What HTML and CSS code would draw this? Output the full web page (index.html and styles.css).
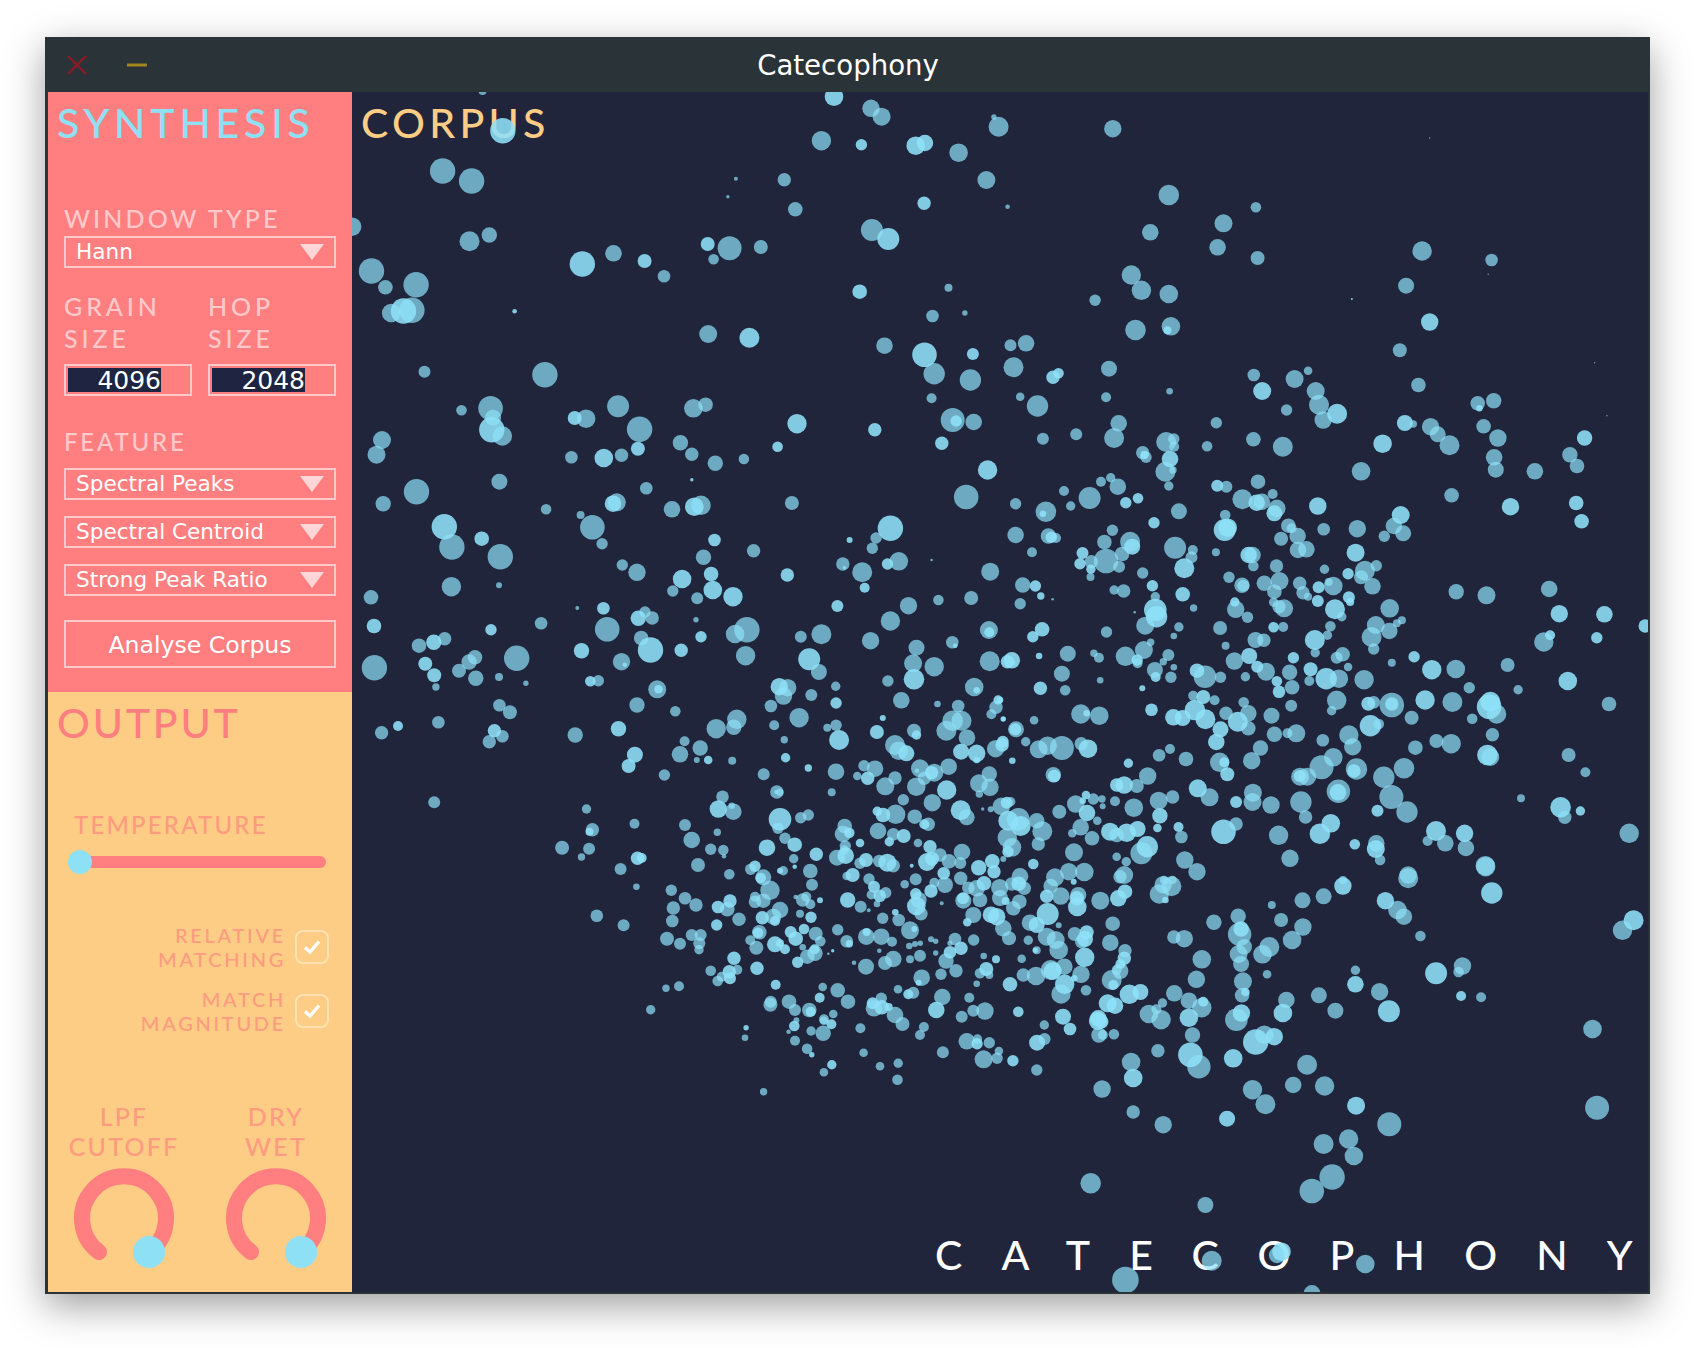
FILE: index.html
```html
<!DOCTYPE html>
<html lang="en">
<head>
    <meta charset="UTF-8">
    <title>Catecophony</title>
    <link rel="stylesheet" href="styles.css">
</head>
<body>
<div class="window">
    <header class="titlebar">
        <div class="controls">
            <svg class="ctl" width="20" height="20" viewBox="0 0 20 20"><path d="M1 1L19 19M19 1L1 19" stroke="#8c1a24" stroke-width="2.4" fill="none"/></svg>
            <svg class="ctl" width="20" height="20" viewBox="0 0 20 20"><path d="M0 10H20" stroke="#a3861f" stroke-width="3" fill="none"/></svg>
        </div>
        <span class="title">Catecophony</span>
    </header>

    <div class="main">
        <aside class="sidebar">
            <section class="panel synthesis">
                <h2 class="panel-title">SYNTHESIS</h2>

                <div class="label window-label">WINDOW TYPE</div>
                <div class="select">Hann</div>

                <div class="size-row">
                    <div class="size">
                        <div class="label">GRAIN<br>SIZE</div>
                        <div class="number"><span class="selected">4096</span></div>
                    </div>
                    <div class="size">
                        <div class="label">HOP<br>SIZE</div>
                        <div class="number"><span class="selected">2048</span></div>
                    </div>
                </div>

                <div class="label feature-label">FEATURE</div>
                <div class="select">Spectral Peaks</div>
                <div class="select">Spectral Centroid</div>
                <div class="select">Strong Peak Ratio</div>

                <button class="analyse" type="button">Analyse Corpus</button>
            </section>

            <section class="panel output">
                <h2 class="panel-title">OUTPUT</h2>

                <div class="label temp-label">TEMPERATURE</div>
                <div class="slider"><span class="thumb"></span></div>

                <div class="check-row first">
                    <div class="check-label">RELATIVE<br>MATCHING</div>
                    <div class="check"><svg width="18" height="16" viewBox="0 0 18 16"><path d="M2 8.5L7 13L16 2.5" stroke="#fff" stroke-width="3.4" fill="none"/></svg></div>
                </div>
                <div class="check-row">
                    <div class="check-label">MATCH<br>MAGNITUDE</div>
                    <div class="check"><svg width="18" height="16" viewBox="0 0 18 16"><path d="M2 8.5L7 13L16 2.5" stroke="#fff" stroke-width="3.4" fill="none"/></svg></div>
                </div>

                <div class="knobs">
                    <div class="knob">
                        <div class="label">LPF<br>CUTOFF</div>
                        <svg width="116" height="116" viewBox="0 0 116 116">
                            <path d="M33 92A42 42 0 1 1 83 92" fill="none" stroke="#ff7f80" stroke-width="16" stroke-linecap="round"/>
                            <circle cx="83" cy="92" r="16" fill="#8ee1f4"/>
                        </svg>
                    </div>
                    <div class="knob">
                        <div class="label">DRY<br>WET</div>
                        <svg width="116" height="116" viewBox="0 0 116 116">
                            <path d="M33 92A42 42 0 1 1 83 92" fill="none" stroke="#ff7f80" stroke-width="16" stroke-linecap="round"/>
                            <circle cx="83" cy="92" r="16" fill="#8ee1f4"/>
                        </svg>
                    </div>
                </div>
            </section>
        </aside>

        <main class="corpus">
            <h2 class="corpus-title">CORPUS</h2>
            <div class="wordmark">CATECOPHON<span class="last">Y</span></div>
            <svg id="grains" class="grains" width="1296" height="1200"></svg>
        </main>
    </div>
</div>
<script src="scatter.js"></script>
</body>
</html>
```

FILE: styles.css
```css
* {
    box-sizing: border-box;
}

html {
    background: #fff;
}

body {
    margin: 0;
    min-height: 1348px;
    padding: 37px 46px 54px 45px;
    background: #fff;
    font-family: 'Lato', 'Liberation Sans', sans-serif;
}

.window {
    width: 1605px;
    border: 2px solid #2a3338;
    border-left-width: 3px;
    background: #2a3338;
    box-shadow: 0 12px 36px rgba(0, 0, 0, 0.38);
}

.titlebar {
    position: relative;
    height: 53px;
    display: flex;
    align-items: center;
    justify-content: center;
    background: #2a3338;
}

.controls {
    position: absolute;
    left: 19px;
    top: 16px;
    display: flex;
    gap: 40px;
}

.ctl {
    display: block;
}

.title {
    font-family: 'DejaVu Sans', sans-serif;
    font-size: 27.6px;
    color: #fff;
}

.main {
    display: flex;
    height: 1200px;
}

.sidebar {
    width: 304px;
    flex: none;
    display: flex;
    flex-direction: column;
}

.panel {
    height: 600px;
    padding: 7px 16px 0;
}

.synthesis {
    background: #ff7f80;
}

.output {
    background: #fdcc85;
}

.panel-title {
    margin: 0 0 0 -7px;
    font-size: 41px;
    line-height: 48px;
    font-weight: 500;
    letter-spacing: 4.8px;
}

.synthesis .panel-title {
    color: #8ee1f4;
}

.output .panel-title {
    color: #ff7f80;
    letter-spacing: 2.8px;
}

.label {
    font-size: 25px;
    font-weight: 500;
    line-height: 32px;
    letter-spacing: 3.1px;
    color: #ffc9cc;
}

.window-label {
    margin-top: 55px;
    margin-bottom: 2px;
}

.select {
    height: 32px;
    border: 2px solid #ffc9cc;
    display: flex;
    align-items: center;
    justify-content: space-between;
    padding: 0 10px 2px 10px;
    font-family: 'DejaVu Sans', sans-serif;
    font-size: 21.6px;
    color: #fff;
    margin-bottom: 16px;
}

.select::after {
    content: "";
    width: 0;
    height: 0;
    margin-top: 2px;
    border-left: 12px solid transparent;
    border-right: 12px solid transparent;
    border-top: 16px solid #ffd6d8;
}

.size-row {
    display: flex;
    gap: 16px;
    margin-top: 22px;
}

.size {
    width: 128px;
}

.size .label {
    letter-spacing: 3.9px;
}

.number {
    margin-top: 10px;
    height: 32px;
    border: 2px solid #ffc9cc;
    padding: 2px 0 2px 2px;
}

.selected {
    display: block;
    width: 93px;
    height: 24px;
    background: #1f2540;
    color: #fff;
    text-align: right;
    font-family: 'DejaVu Sans', sans-serif;
    font-size: 25px;
    line-height: 25px;
}

.feature-label {
    margin-top: 30px;
    margin-bottom: 10px;
    letter-spacing: 2.8px;
    font-size: 24px;
}

.analyse {
    display: block;
    width: 100%;
    height: 48px;
    margin-top: 24px;
    border: 2px solid #ffc9cc;
    background: transparent;
    color: #fff;
    font-family: 'DejaVu Sans', sans-serif;
    font-size: 23.6px;
    padding: 2px 0 0;
}

.output .label {
    color: #fe9b80;
}

.temp-label {
    margin: 62px 0 9px 10px;
    font-size: 24px;
    letter-spacing: 2.2px;
}

.slider {
    position: relative;
    height: 12px;
    margin: 15px 10px 0 16px;
    border-radius: 6px;
    background: #ff7f80;
}

.thumb {
    position: absolute;
    left: -12px;
    top: -6px;
    width: 24px;
    height: 24px;
    border-radius: 50%;
    background: #8ee1f4;
}

.check-row {
    display: flex;
    justify-content: flex-end;
    align-items: center;
    gap: 9px;
    height: 48px;
    margin-top: 16px;
    padding-right: 7px;
}

.check-row.first {
    margin-top: 55px;
}

.check-label {
    font-size: 20px;
    font-weight: 500;
    line-height: 24px;
    letter-spacing: 2.7px;
    color: #fe9b80;
    text-align: right;
}

.check {
    width: 34px;
    height: 34px;
    border: 2px solid #ffe1b3;
    border-radius: 8px;
    display: flex;
    align-items: center;
    justify-content: center;
}

.knobs {
    display: flex;
    gap: 12px;
    margin: 66px -10px 0;
}

.knob {
    width: 140px;
    text-align: center;
}

.knob .label {
    line-height: 30px;
    letter-spacing: 2.2px;
}

.knob svg {
    display: block;
    margin: -1px auto 0;
}

.corpus {
    position: relative;
    flex: 1;
    overflow: hidden;
    background: #20253c;
}

.corpus-title {
    position: absolute;
    left: 9px;
    top: 7px;
    margin: 0;
    font-size: 41px;
    line-height: 48px;
    font-weight: 500;
    letter-spacing: 4.3px;
    color: #fdcc85;
}

.wordmark {
    position: absolute;
    left: 583px;
    top: 1139px;
    font-size: 41px;
    font-weight: 500;
    line-height: 48px;
    letter-spacing: 39.2px;
    color: #fff;
    white-space: nowrap;
}

.wordmark .last {
    letter-spacing: 0;
}

.grains {
    position: absolute;
    left: 0;
    top: 0;
}
```

FILE: scatter.js
```js
// Corpus grains, grouped in patches of the map.
// Patch = [left, top, x scale, points], point = [x, y, r, bright]; y and r are always at scale 3.
const patches = [
[350,85,2.376,[[315,18,12,0],[1150,35,28,1],[1238,70,26,0],[1263,95,27,0],[1530,96,8,0],[1541,125,30,0],[1120,167,29,0],[1215,179,17,1],[1344,182,28,1],[1366,174,25,1],[1446,203,28,0],[1512,285,27,0],[220,258,38,0],[289,288,38,0],[363,137,38,1],[917,281,6,0],[898,335,5,0],[1032,284,20,0],[1058,373,22,0],[1364,355,20,1],[5,425,28,0],[284,469,30,0],[331,450,23,0],[1240,435,33,0],[1279,462,33,1],[552,537,38,1],[626,505,25,0],[700,528,21,1],[746,574,19,0],[850,477,21,1],[902,490,36,0],[864,523,16,0],[976,486,21,0],[51,558,38,0],[84,607,22,0],[157,599,38,0],[98,684,28,0],[147,676,38,0],[127,678,38,1],[391,679,7,1],[1211,620,22,1],[1422,608,12,0],[1384,693,19,0],[1461,684,8,0],[851,747,27,0],[949,758,30,1],[1270,782,25,0],[1365,809,37,1],[1480,807,18,1],[1388,866,32,0],[1474,885,32,0],[177,860,18,0],[463,869,38,0],[1382,940,15,0],[334,970,37,0],[340,998,24,0],[362,1053,29,0],[337,1034,38,1],[265,976,16,0],[637,964,33,0],[561,1001,28,0],[534,999,21,1],[688,1033,38,0],[816,970,28,0],[845,959,22,0],[1062,1016,29,1],[1247,1034,20,1],[1432,1005,36,0],[1440,1008,17,1],[1482,1011,25,0],[76,1065,27,0],[63,1109,27,0],[1406,1075,20,1],[785,1073,23,0],[812,1108,20,0],[684,1091,21,1],[645,1111,20,0],[603,1119,28,1],[526,1117,19,0],[868,1135,23,0],[936,1122,16,0],[1016,1085,16,1],[1515,1155,29,1],[812,1184,5,1]]],
[1000,85,2.376,[[268,131,26,0],[1021,159,2,0],[18,365,7,0],[401,330,31,0],[357,442,25,0],[608,367,16,0],[531,415,27,0],[517,487,25,0],[612,519,21,0],[1003,498,29,0],[1168,525,19,0],[1160,568,2,0],[312,570,29,0],[336,616,29,0],[401,627,28,0],[226,646,17,0],[965,602,24,0],[836,642,3,1],[1021,711,26,1],[322,735,31,0],[406,724,28,0],[398,736,12,1],[950,796,21,0],[25,781,18,0],[62,775,25,0],[32,847,30,0],[126,877,20,1],[139,865,16,1],[259,851,24,0],[1413,833,2,0],[603,870,19,0],[700,882,27,0],[732,857,13,0],[623,918,27,1],[994,900,22,0],[750,918,27,0],[758,959,30,0],[768,1005,26,0],[801,986,30,1],[681,975,17,0],[48,935,13,0],[89,963,32,0],[252,937,15,0],[403,919,10,0],[1135,955,22,0],[1173,947,23,0],[1139,970,10,1],[962,1014,24,1],[982,1017,11,0],[1023,1025,26,0],[1040,1048,24,0],[1068,1081,30,0],[1149,1024,22,0],[1183,1059,26,0],[1442,992,2,0],[282,1015,25,0],[271,1059,30,0],[514,1013,17,0],[181,1048,18,0],[102,1061,18,0],[602,1063,22,0],[492,1084,16,0],[672,1085,30,0],[909,1076,28,1],[1389,1059,23,1],[395,1071,30,0],[413,1062,17,0],[414,1085,15,0],[339,1103,20,0],[347,1117,17,0],[343,1109,12,1],[393,1160,30,0],[404,1122,25,1],[411,1155,11,0],[1174,1117,25,0],[1178,1154,24,0],[1354,1109,23,0],[1371,1143,22,0],[858,1159,28,0],[1271,1159,25,0],[263,1178,14,0]]],
[350,480,2.376,[[158,35,38,0],[355,5,24,0],[79,71,23,0],[466,88,16,0],[704,25,19,0],[634,67,27,0],[625,71,25,1],[548,105,12,0],[576,142,37,0],[599,191,17,0],[765,88,25,0],[834,76,29,0],[818,80,28,1],[1050,69,21,0],[1464,51,37,0],[242,201,38,0],[224,140,38,1],[313,176,22,1],[357,230,38,0],[241,320,29,0],[354,316,9,0],[50,352,22,0],[57,438,22,1],[647,255,17,0],[682,277,26,0],[866,180,19,1],[840,232,23,0],[959,212,20,0],[789,297,28,1],[858,282,22,1],[862,330,28,1],[910,350,29,1],[767,333,17,0],[825,355,18,0],[1039,285,20,1],[1284,145,38,1],[1187,180,9,1],[1250,174,17,0],[1241,205,17,0],[1171,252,20,0],[1175,263,5,1],[1217,277,30,0],[1304,244,28,0],[1277,252,17,1],[1223,323,15,1],[1382,240,4,0],[1521,275,27,0],[1158,378,18,1],[1327,377,26,0],[1398,360,16,0],[1476,354,21,0],[1284,423,29,0],[540,384,6,0],[602,385,19,1],[701,396,17,0],[718,414,20,0],[685,415,23,1],[611,448,37,0],[822,419,8,0],[943,449,38,0],[915,462,28,0],[834,470,17,1],[692,474,22,0],[714,510,38,1],[787,511,20,1],[550,512,23,1],[645,545,26,0],[653,554,7,1],[940,527,29,0],[1071,470,18,0],[1120,463,30,0],[1237,482,26,0],[1346,503,24,0],[1431,487,19,0],[1438,497,7,1],[1518,450,27,0],[1519,457,15,1],[1114,576,24,0],[1091,538,33,1],[1338,550,27,0],[1388,560,29,0],[1520,544,30,0],[1562,545,20,1],[1340,598,31,1],[454,430,19,0],[335,449,17,1],[225,476,20,0],[164,497,22,0],[199,487,23,1],[179,551,21,1],[200,586,21,1],[204,621,11,0],[58,563,38,0],[259,572,21,0],[283,546,23,0],[297,532,22,0],[396,535,38,0],[299,595,23,0],[354,591,12,0],[418,610,8,0],[355,676,19,0],[380,697,21,0],[210,727,19,0],[114,738,15,1],[75,758,20,0],[362,769,19,0],[331,785,20,0],[343,752,20,1],[200,967,18,0],[590,602,17,0],[571,604,16,1],[730,628,27,0],[733,628,13,1],[682,675,23,0],[773,694,16,0],[638,746,23,1],[535,765,23,0],[677,824,24,1],[662,858,21,1],[795,784,15,0],[832,804,23,0],[784,823,25,0],[824,840,9,0],[851,840,13,1],[908,842,12,0],[747,885,17,0],[870,746,29,0],[919,718,29,0],[912,742,23,0],[1040,623,26,0],[1030,648,26,0],[1020,620,26,1],[1000,678,19,0],[1096,645,18,0],[1154,619,14,0],[1155,669,17,1],[1067,713,29,0],[1008,736,15,0],[1032,779,11,0],[1035,833,14,1],[1089,863,10,1],[1155,736,17,0],[1134,743,12,0],[1162,780,30,1],[983,883,18,0],[1014,936,20,0],[1013,936,6,1],[1155,873,25,0],[1145,937,10,0],[1278,603,17,0],[1310,661,25,0],[1396,672,10,0],[1266,714,9,1],[1252,756,21,1],[1483,621,28,0],[1489,631,10,1],[1445,678,19,0],[1535,682,20,0],[1540,660,14,1],[1524,703,15,0],[1552,717,8,1],[1432,722,31,0],[1453,722,30,0],[1417,752,30,0],[1466,773,25,0],[1340,752,21,0],[1346,765,14,1],[1295,795,30,0],[1304,812,28,0],[1322,820,24,1],[1534,806,26,0],[1551,785,18,1],[1452,815,24,1],[1489,820,26,1],[1222,857,17,0],[1246,866,24,0],[1204,889,13,0],[1230,895,19,1],[1294,893,20,0],[1270,918,27,0],[1354,866,26,0],[1422,860,24,0],[1387,877,28,0],[1367,900,17,0],[1345,920,26,0],[1347,872,6,1],[1417,928,29,1],[1518,881,19,0],[1492,910,26,0],[1520,922,26,0],[1495,942,10,0],[1315,959,16,0],[1383,967,26,0],[1503,987,4,0],[1522,988,9,0],[1535,985,18,0],[1553,970,22,1],[1561,1020,30,1],[885,950,19,0],[908,975,11,0],[911,995,24,0],[875,987,25,1],[1017,1048,15,0],[1024,1018,32,1],[1072,1013,17,0],[1089,1005,15,0],[1254,992,12,1],[1298,1003,28,0],[1265,1005,22,1],[1341,1010,21,0],[1380,1032,15,0],[1365,1032,19,1],[1465,1013,25,0],[1452,990,31,1],[1175,1038,20,0],[1175,1062,23,0],[1185,1057,15,1],[1254,1053,24,0],[1282,1085,11,1],[1290,1060,18,0],[1315,1067,20,1],[1350,1088,12,0],[1377,1098,17,1],[1177,1093,15,0],[1212,1089,11,1],[1158,1135,22,0],[1177,1128,24,1],[562,987,14,0],[576,1049,20,0],[569,1055,12,1],[676,1031,15,0],[504,1103,21,0],[568,1106,18,0],[550,1131,11,0],[683,1135,20,1],[643,1167,18,0],[796,1035,18,0],[873,1057,10,0],[812,1080,25,0],[856,1108,18,0],[887,1111,16,0],[889,1129,5,0],[826,1155,21,0],[902,1183,17,0],[1034,1072,16,0],[1056,1094,22,1],[991,1103,25,1],[1107,1122,19,1],[1054,1137,14,0],[1056,1160,6,1],[1093,1172,21,0],[952,1167,14,0],[962,1160,17,1],[982,1188,20,1],[1030,1172,12,0],[1020,1171,13,1],[1215,1150,18,0],[1227,1140,20,1],[1258,1143,18,0],[1295,1157,17,0],[1277,1148,25,1],[1334,1157,5,1],[1233,1195,17,0],[1190,1185,18,1],[1400,1125,18,0],[1423,1142,20,0],[1375,1142,27,1],[1455,1115,21,0],[1450,1150,15,0],[1411,1180,17,1],[1490,1162,20,1],[1527,1150,18,1],[1530,1172,20,1],[1350,1195,16,0],[1555,1120,15,0],[1450,1195,15,0],[1500,1195,15,1]]],
[1000,480,2.376,[[240,5,15,0],[280,20,25,0],[152,33,15,0],[213,54,33,0],[168,78,14,0],[37,71,17,0],[109,95,31,0],[102,101,10,1],[299,68,17,1],[328,55,16,1],[401,18,14,0],[425,94,24,0],[366,128,17,1],[538,20,18,0],[516,17,18,1],[613,5,22,0],[576,58,30,0],[622,65,25,0],[610,68,25,1],[648,42,15,0],[658,85,26,0],[652,100,24,1],[535,105,16,0],[534,150,33,1],[541,143,28,1],[755,78,26,1],[769,148,19,0],[685,137,22,0],[668,176,21,0],[693,145,15,0],[707,168,25,0],[708,210,25,0],[728,208,25,0],[849,146,26,0],[936,138,25,0],[952,105,27,1],[958,160,24,0],[913,169,17,0],[845,218,27,1],[771,268,14,0],[867,272,30,0],[827,281,17,1],[894,257,17,0],[858,292,21,0],[885,319,25,0],[37,165,25,0],[115,168,23,0],[133,174,15,0],[122,172,17,1],[267,151,17,0],[248,186,22,0],[309,185,30,0],[314,200,24,1],[196,219,18,1],[76,217,15,0],[190,251,17,1],[217,245,20,0],[216,268,14,1],[215,291,12,0],[252,243,37,0],[290,222,22,0],[283,260,18,0],[339,279,17,0],[416,203,33,0],[458,210,15,0],[455,232,18,0],[438,265,30,1],[513,217,12,0],[544,292,17,0],[362,317,17,1],[434,343,22,1],[271,330,14,0],[294,333,20,0],[54,315,23,0],[84,318,17,1],[97,348,11,1],[48,371,17,0],[125,358,4,0],[602,258,16,0],[600,225,25,0],[591,225,25,1],[657,258,20,0],[628,310,23,0],[664,303,27,0],[652,335,22,0],[575,316,23,0],[578,317,18,0],[712,310,20,0],[720,338,20,0],[732,350,12,0],[792,318,28,0],[781,306,12,0],[757,322,18,1],[755,363,18,1],[829,352,18,1],[832,366,12,1],[812,410,14,0],[796,388,30,1],[926,385,28,0],[369,350,14,0],[345,437,27,0],[369,390,34,1],[372,410,32,1],[320,397,4,0],[460,384,11,0],[560,388,26,0],[558,366,14,1],[588,412,17,0],[650,367,14,0],[675,385,27,0],[663,380,20,0],[523,444,21,0],[425,441,14,0],[253,456,17,0],[100,448,22,1],[78,470,17,1],[413,468,10,0],[536,497,12,0],[650,442,16,1],[673,441,15,0],[785,439,16,0],[778,466,14,0],[749,518,14,0],[748,480,30,1],[893,435,27,0],[925,453,25,0],[943,430,12,0],[955,421,12,0],[883,471,30,0],[888,507,17,0],[607,480,24,0],[627,481,20,0],[557,543,26,0],[592,528,24,1],[632,575,27,0],[611,560,18,1],[358,487,11,0],[342,510,27,0],[298,529,29,0],[327,550,15,0],[326,540,17,1],[400,525,18,0],[388,545,11,0],[413,562,10,0],[368,570,24,0],[370,591,15,1],[406,592,17,0],[28,541,25,1],[30,549,8,0],[93,528,10,1],[161,521,24,0],[223,520,11,0],[235,533,15,0],[147,581,24,0],[238,601,10,0],[96,625,20,1],[155,631,16,0],[338,625,9,1],[697,533,17,1],[814,523,22,0],[800,533,18,0],[827,561,13,0],[738,568,21,1],[487,590,34,0],[468,572,22,1],[524,592,17,0],[583,590,14,0],[688,577,23,0],[694,622,22,0],[658,604,16,1],[663,635,19,1],[735,603,15,0],[805,596,28,0],[775,596,32,1],[865,599,29,0],[984,530,17,1],[931,548,12,0],[1026,569,29,1],[1083,567,28,0],[1206,555,21,0],[1115,623,17,0],[1231,629,14,0],[1073,46,22,0],[1213,80,26,1],[1369,69,22,1],[1382,124,22,1],[1084,335,23,0],[1156,346,27,0],[1305,327,25,0],[1329,401,26,1],[1436,403,25,1],[1292,486,29,0],[1307,466,15,1],[1418,473,17,1],[1533,438,20,1],[1349,603,28,1],[1447,672,22,0],[1351,825,21,0],[1391,877,15,0],[1238,955,12,0],[1342,1012,20,0],[1332,982,31,1],[1379,993,14,1],[1495,1060,29,0],[800,661,29,0],[788,692,14,0],[888,667,19,0],[875,671,21,1],[931,675,37,0],[931,672,20,1],[1010,660,29,1],[1075,666,30,0],[978,713,21,0],[1122,716,16,0],[1180,702,29,0],[1162,680,37,1],[1165,665,30,1],[1170,764,20,0],[459,647,15,0],[483,651,21,1],[510,661,15,0],[579,667,16,0],[463,690,31,1],[412,712,25,1],[434,714,24,1],[488,718,30,1],[524,748,24,1],[537,700,20,0],[590,700,25,0],[590,745,22,0],[565,725,30,1],[514,786,25,1],[692,677,18,0],[645,707,24,0],[652,763,23,0],[683,760,15,0],[704,760,27,0],[900,732,16,0],[880,737,32,1],[767,781,19,0],[829,765,29,0],[838,800,26,0],[987,803,22,0],[1037,783,21,0],[1072,791,29,0],[1165,831,27,0],[1158,825,31,1],[619,804,23,0],[598,842,26,0],[522,847,29,0],[533,847,15,1],[540,883,21,1],[442,837,22,0],[378,826,19,0],[404,807,15,0],[305,850,14,1],[351,888,26,0],[325,918,21,0],[295,915,26,1],[127,885,22,0],[127,885,17,1],[360,689,19,1],[81,721,13,0],[38,748,24,0],[36,748,18,1],[8,717,7,1],[0,660,10,1],[61,785,14,0],[92,808,27,0],[113,797,28,0],[147,804,36,0],[193,791,20,0],[209,806,28,1],[30,841,9,1],[5,795,20,1],[192,702,29,0],[236,707,28,0],[206,700,10,1],[730,890,27,0],[713,890,27,0],[712,888,18,1],[764,862,36,0],[792,832,28,0],[847,867,32,0],[841,873,20,1],[912,892,32,0],[960,865,31,0],[804,934,35,0],[803,937,25,1],[930,951,36,0],[967,996,32,0],[897,992,18,1],[498,952,27,0],[470,925,27,1],[377,962,27,0],[410,951,20,0],[318,983,28,0],[380,1007,23,1],[374,1044,13,1],[424,1041,15,1],[431,1071,19,0],[601,938,27,0],[600,966,27,0],[561,966,18,1],[644,975,26,0],[715,966,32,0],[726,1011,20,0],[786,1030,28,1],[760,1061,31,1],[662,1066,29,0],[561,1032,20,0],[531,1055,37,1],[180,970,25,0],[203,944,14,1],[222,958,16,0],[242,957,10,0],[243,980,8,0],[273,963,14,0],[141,994,20,0],[206,1000,24,1],[231,1022,11,0],[192,1042,24,0],[172,1060,12,0],[218,1075,21,0],[262,1053,26,1],[301,1058,28,1],[327,1047,24,1],[280,1080,15,0],[336,1120,33,0],[350,1100,32,1],[90,1092,17,0],[175,1117,27,0],[25,965,13,0],[15,970,20,1],[43,1010,30,0],[87,1020,20,0],[100,1055,27,0],[45,1035,32,1],[20,1040,25,1],[15,1105,28,0],[25,1100,25,0],[5,1135,8,0],[80,1150,14,1],[282,1128,14,0],[300,1145,14,0],[439,1140,26,0],[468,1175,26,0],[295,1185,27,0],[130,1185,25,0],[162,1172,24,0],[200,1175,27,0],[45,1190,23,0],[689,1135,26,0],[843,1093,16,1],[894,1090,25,0],[893,1107,27,1],[903,1140,16,0],[970,1185,26,0],[1016,1083,15,0],[1058,1090,25,0],[1036,1053,30,1],[1107,1104,25,0],[1104,1060,26,1],[1153,1157,29,0],[815,1200,12,0],[390,1200,13,0],[410,1200,13,0]]],
[550,860,2.8,[[242,80,10,0],[340,91,17,0],[378,115,18,0],[408,135,19,0],[345,144,18,0],[342,182,18,0],[131,167,19,0],[206,196,18,0],[498,150,20,0],[473,141,20,1],[505,123,18,1],[467,194,17,1],[530,178,19,0],[615,90,28,0],[733,73,17,0],[574,125,20,0],[600,125,15,0],[643,145,24,0],[595,172,18,1],[626,178,22,1],[687,112,6,0],[755,121,9,1],[713,110,15,0],[730,132,13,0],[700,160,11,0],[731,172,16,1],[833,120,22,1],[870,140,18,0],[893,151,6,0],[893,58,16,0],[905,78,18,1],[930,98,20,0],[918,105,13,0],[916,130,8,0],[1023,138,28,1],[1040,160,18,1],[1025,100,16,1],[1060,95,20,1],[1100,80,24,0],[1097,130,6,0],[1023,57,18,0],[992,72,12,0],[1170,85,16,0],[1157,120,24,1],[1204,122,20,0],[1258,75,28,0],[1212,72,24,1],[1262,112,20,0],[1276,122,12,0],[1297,145,22,0],[1316,125,20,0],[1330,85,15,0],[1312,72,24,1],[1185,165,24,0],[1168,187,12,1],[1268,185,25,0],[1243,168,28,1],[1285,235,20,0],[1350,190,28,0],[1393,160,30,1],[1365,195,20,1],[1340,188,15,1],[1425,195,10,0],[1430,107,24,0],[1390,110,18,1],[1475,120,30,1],[1540,121,24,0],[1390,235,28,0],[1420,240,25,0],[1425,272,25,0],[1475,222,24,0],[1500,228,25,1],[1569,250,22,0],[932,175,18,0],[977,180,18,0],[966,157,10,1],[1008,212,25,0],[1019,207,9,1],[806,209,16,0],[831,244,18,0],[838,253,8,1],[888,233,24,0],[885,215,12,1],[926,231,24,0],[957,244,14,0],[587,218,22,0],[586,218,15,1],[559,242,13,0],[577,262,20,0],[630,252,23,1],[657,268,14,1],[674,218,18,1],[688,236,20,1],[711,206,15,1],[745,222,19,0],[757,244,15,0],[708,263,10,0],[742,290,21,0],[718,290,22,0],[743,268,15,1],[693,306,16,1],[792,271,5,1],[780,281,4,1],[515,295,19,1],[524,328,14,0],[505,358,15,0],[470,364,15,0],[503,342,20,1],[452,332,15,0],[579,325,19,1],[327,236,20,0],[364,251,17,0],[399,224,19,0],[421,226,17,0],[417,250,16,0],[417,268,13,0],[324,385,10,0],[362,379,14,0],[282,449,14,0],[632,374,14,1],[617,434,21,0],[670,424,21,0],[686,450,16,0],[725,449,20,0],[735,460,17,1],[755,413,14,1],[765,381,12,0],[807,392,21,0],[833,425,20,0],[793,461,12,0],[690,481,9,0],[684,498,16,1],[668,515,7,0],[767,482,13,0],[788,493,15,1],[731,513,14,0],[765,520,23,0],[686,542,15,0],[720,566,16,0],[733,584,8,1],[549,503,8,1],[546,533,10,0],[885,320,21,0],[852,309,6,0],[938,308,21,0],[962,297,23,0],[1007,298,11,0],[1036,288,17,0],[1005,257,9,0],[1021,254,8,0],[1037,250,8,0],[1066,239,8,0],[1079,244,8,0],[1080,280,8,0],[1119,252,8,0],[1132,238,20,0],[1150,264,19,1],[1186,238,15,0],[1108,303,22,0],[1118,278,17,1],[1136,331,19,0],[1096,343,16,0],[922,271,7,0],[1041,353,22,0],[1034,368,7,0],[1214,288,10,0],[1249,299,11,1],[1195,341,14,0],[1205,352,10,0],[1231,345,11,0],[1222,325,21,1],[1194,371,9,0],[1321,295,13,0],[1340,241,13,0],[1360,271,14,0],[1368,271,9,0],[1287,374,21,1],[1326,344,17,0],[1363,349,27,0],[1442,322,24,0],[1403,333,28,1],[1487,343,26,0],[1470,355,12,1],[1430,405,27,0],[1441,372,26,1],[1501,391,15,0],[1497,293,27,1],[1569,360,24,0],[975,388,12,0],[1022,397,18,0],[1004,403,14,1],[1099,411,24,0],[1082,451,24,1],[1174,413,14,0],[1185,451,17,0],[1218,453,25,0],[1153,472,17,0],[1311,455,15,1],[1436,473,23,1],[1456,507,19,1],[1384,495,14,0],[905,444,20,0],[904,430,18,1],[928,413,15,0],[930,441,20,1],[965,462,23,0],[987,492,21,0],[869,505,15,0],[1047,501,15,0],[1036,525,15,0],[1537,525,23,0],[1534,483,27,1],[1566,420,25,1],[1167,544,25,0],[1197,537,14,0],[1196,551,17,1],[1230,548,17,0],[1385,537,18,0],[1364,548,24,1],[1100,577,18,0],[1257,573,13,0],[1252,595,17,0],[1214,598,27,0],[1296,602,17,1],[1363,630,17,0],[878,578,13,0],[924,619,13,0],[975,610,14,0],[973,659,16,0],[767,637,13,0],[789,614,14,1],[598,695,11,0],[1546,687,26,0],[1514,970,31,0]]],
[1100,860,2.8,[[70,95,22,1],[55,117,24,1],[5,122,25,0],[200,79,30,0],[177,74,26,0],[166,102,29,0],[183,120,10,1],[38,190,22,0],[29,247,23,0],[70,272,20,0],[68,295,20,1],[57,333,24,0],[57,312,15,1],[30,358,27,0],[36,373,14,1],[319,187,23,0],[207,231,20,0],[236,236,26,0],[285,298,28,0],[270,358,26,0],[387,169,23,0],[391,223,35,0],[395,207,23,1],[404,260,23,0],[388,282,27,0],[395,312,24,0],[400,364,27,0],[398,406,22,0],[407,396,13,1],[481,135,12,0],[567,121,24,0],[626,109,24,0],[680,78,26,1],[507,180,21,0],[568,201,26,0],[538,240,28,0],[474,261,30,0],[455,283,28,0],[468,343,13,0],[833,150,28,0],[851,170,25,0],[799,122,26,1],[863,55,30,0],[1080,20,29,0],[1097,99,32,1],[897,228,16,0],[1463,211,29,0],[1494,181,30,1],[715,331,14,0],[715,373,25,1],[613,406,24,0],[659,452,24,0],[783,395,26,0],[809,454,33,1],[941,340,33,1],[1015,318,26,0],[1004,336,16,0],[1011,408,15,1],[1067,412,15,0],[522,420,25,0],[512,459,28,1],[208,400,25,0],[175,429,14,0],[158,448,15,0],[137,462,28,0],[171,479,29,0],[249,422,25,0],[285,443,29,0],[289,425,15,1],[249,473,28,1],[82,403,29,1],[113,396,24,1],[22,430,26,1],[47,438,29,1],[5,485,20,1],[8,525,15,0],[39,523,16,0],[382,479,34,0],[396,459,26,1],[460,524,28,0],[436,546,38,1],[488,530,26,1],[259,525,23,0],[162,572,20,0],[277,620,35,0],[253,584,37,1],[373,595,28,1],[87,606,28,0],[93,654,28,1],[580,614,30,0],[427,689,29,0],[463,733,30,0],[541,675,25,0],[629,678,29,0],[717,737,27,1],[93,756,20,0],[177,794,26,0],[356,776,24,1],[810,793,36,0],[1379,507,28,0],[1392,743,36,0],[626,852,30,0],[696,837,29,0],[711,888,28,0],[650,951,38,0],[593,993,37,0]]],
[900,1180,2.063,[[630,75,24,0],[465,300,40,0],[643,242,30,0],[778,225,25,0],[787,215,28,1],[960,252,28,0],[850,340,25,0]]]
];

// The two dense clusters have their own finer lists; patches leave these boxes out.
const clusters = [
[780,760,340,260,[[85,24,11,1],[168,35,25,0],[232,48,13,0],[252,17,17,0],[285,26,25,0],[263,55,20,1],[316,79,27,0],[345,54,20,0],[155,97,12,0],[0,97,11,0],[420,25,27,0],[409,80,28,0],[433,55,20,0],[463,38,27,0],[455,38,20,1],[506,20,25,0],[411,32,7,0],[500,90,29,1],[370,119,17,0],[457,128,26,0],[597,70,27,0],[628,42,23,0],[630,82,26,0],[598,102,11,0],[590,0,10,1],[697,2,10,1],[820,44,23,0],[823,48,19,1],[1010,75,20,1],[560,172,24,0],[542,151,30,1],[608,147,5,0],[632,148,9,0],[664,139,26,0],[692,125,14,0],[680,128,18,1],[715,178,34,0],[685,182,30,1],[722,198,30,1],[770,182,23,0],[787,214,30,0],[682,233,29,0],[696,262,28,0],[684,275,17,1],[670,297,9,0],[775,252,20,0],[838,155,21,0],[887,132,26,0],[918,105,13,1],[908,122,10,1],[940,117,17,0],[966,117,11,0],[968,139,9,0],[1005,124,15,0],[921,159,25,1],[952,182,13,0],[902,202,25,0],[877,220,13,0],[936,235,22,0],[1010,225,22,0],[990,215,27,1],[0,178,34,1],[62,173,17,0],[85,165,17,0],[15,235,17,0],[44,254,22,1],[194,198,22,0],[189,222,25,0],[208,218,16,1],[294,213,25,0],[292,154,14,1],[347,163,29,0],[309,165,22,1],[404,170,22,0],[445,193,20,0],[433,193,15,1],[340,223,19,0],[328,245,14,1],[371,228,21,1],[240,249,13,1],[414,249,13,0],[196,258,17,0],[171,293,24,0],[193,270,14,0],[197,287,25,1],[450,260,20,1],[480,285,20,0],[507,304,22,0],[441,306,27,1],[456,296,21,1],[546,276,25,0],[541,309,18,0],[109,283,20,1],[41,296,14,0],[44,320,7,1],[91,333,22,0],[10,332,14,0],[0,332,9,1],[96,374,18,0],[240,310,17,0],[258,300,21,1],[298,303,19,0],[340,317,20,0],[322,308,27,1],[395,317,6,1],[200,348,13,0],[218,345,21,1],[267,357,17,0],[274,404,14,0],[317,398,17,0],[282,380,18,1],[299,407,19,1],[291,432,10,0],[407,358,18,0],[374,373,13,0],[495,375,24,0],[463,368,15,0],[491,340,19,1],[453,393,20,1],[416,420,24,0],[407,401,17,1],[423,461,20,0],[409,438,28,1],[485,430,6,0],[542,355,20,0],[565,383,19,0],[590,385,25,0],[600,420,22,0],[596,323,23,1],[637,304,22,1],[642,335,20,1],[612,370,22,1],[550,422,24,0],[549,415,18,1],[580,465,24,0],[562,487,13,1],[659,383,26,0],[660,414,24,0],[695,372,20,0],[720,349,25,0],[733,385,20,0],[716,371,22,1],[718,425,22,0],[700,445,22,0],[677,423,12,1],[670,505,25,0],[687,535,21,0],[633,464,25,1],[650,470,26,1],[203,420,23,1],[242,440,18,0],[266,451,6,0],[120,421,9,1],[79,410,15,0],[47,411,7,0],[68,420,20,0],[91,433,15,0],[0,450,25,0],[60,461,12,0],[93,472,17,1],[308,475,17,0],[356,480,19,0],[346,457,10,1],[390,511,27,0],[403,507,9,1],[173,509,17,0],[107,521,21,0],[121,544,16,0],[72,507,16,1],[32,516,18,1],[47,536,22,1],[0,550,12,1],[15,568,15,1],[68,562,10,0],[200,544,19,0],[208,551,11,1],[259,530,25,0],[260,516,12,1],[304,530,25,0],[336,545,15,0],[388,558,10,0],[405,552,9,0],[421,550,8,0],[453,538,9,0],[467,544,8,0],[525,537,19,0],[510,550,8,0],[543,565,20,1],[510,577,19,1],[581,540,17,0],[467,579,8,0],[105,580,23,0],[82,590,22,0],[104,568,15,1],[53,607,17,1],[145,581,4,0],[158,572,5,1],[298,572,7,0],[222,608,7,0],[258,620,24,0],[315,609,21,0],[340,597,25,0],[390,598,12,0],[420,587,18,0],[498,603,23,0],[528,632,20,0],[483,643,17,0],[611,588,10,0],[648,598,12,1],[600,640,16,0],[628,645,12,0],[619,627,21,1],[590,671,10,0],[425,653,25,0],[416,668,9,1],[354,688,13,0],[400,698,18,0],[385,703,15,1],[487,711,25,0],[469,750,25,1],[568,713,15,0],[580,752,18,0],[615,753,26,0],[545,770,18,0],[715,755,16,1],[690,673,22,1],[730,645,20,0],[768,648,28,0],[745,541,14,0],[770,571,12,0],[766,571,8,1],[725,596,13,0],[760,312,16,1],[825,352,27,0],[866,335,26,0],[913,336,28,0],[881,365,9,1],[812,378,22,0],[842,408,26,0],[800,409,20,1],[895,405,24,0],[890,415,22,1],[892,441,28,1],[750,488,25,0],[803,462,33,1],[770,495,24,1],[836,496,9,0],[800,530,27,0],[827,540,27,0],[836,570,28,0],[884,522,21,0],[905,545,20,0],[920,517,21,1],[915,537,24,1],[914,592,29,1],[853,620,25,0],[812,630,30,0],[818,633,27,1],[903,643,26,0],[843,702,29,0],[854,673,29,1],[883,655,10,1],[918,691,16,0],[961,422,27,0],[998,491,22,0],[991,548,25,0],[1015,415,25,1],[1010,290,13,0],[882,277,27,0],[1020,350,20,0],[995,660,30,0],[1000,675,15,1],[1010,630,15,0],[983,730,27,1],[1005,737,25,1],[955,775,25,1],[849,770,24,1],[27,725,22,0],[45,750,18,0],[88,750,22,0],[92,755,15,1],[119,713,15,1],[128,681,13,0],[173,691,22,0],[204,725,22,0],[160,762,13,0],[132,778,15,0],[304,715,17,0],[345,765,25,0],[282,745,25,0],[278,730,18,1],[305,742,22,1],[326,741,12,1]]],
[640,800,140,200,[[280,35,25,0],[275,17,10,0],[235,27,26,1],[135,75,18,0],[155,120,25,0],[232,97,11,0],[212,148,17,0],[250,150,16,0],[252,169,7,0],[174,195,21,0],[268,223,16,0],[5,174,15,1],[381,143,25,1],[332,208,17,0],[345,199,17,1],[370,232,24,0],[362,234,16,1],[390,271,29,0],[94,271,17,0],[135,295,19,0],[168,315,20,0],[100,324,20,0],[97,363,19,0],[81,416,21,0],[120,431,18,0],[155,405,18,0],[182,405,18,0],[178,430,18,0],[177,449,14,0],[262,328,22,0],[234,321,19,1],[270,303,20,1],[297,358,20,0],[230,375,17,1],[345,305,19,0],[345,290,15,0],[370,302,22,0],[400,350,24,0],[367,353,20,1],[405,363,15,1],[358,397,22,0],[354,398,16,1],[331,421,15,0],[349,443,21,0],[405,433,24,1],[414,85,17,0],[282,475,20,1],[212,512,16,0],[292,509,15,0],[245,530,15,0],[233,543,16,0],[268,515,20,1],[270,535,18,1],[351,505,20,1],[117,559,15,0],[78,565,11,0],[407,554,15,1],[392,605,18,0]]]
];

const svg = document.getElementById('grains');
const ns = 'http://www.w3.org/2000/svg';

// the svg starts at 352,92 on the page
function addGrain(px, py, r, bright) {
    const c = document.createElementNS(ns, 'circle');
    c.setAttribute('cx', (px - 352).toFixed(1));
    c.setAttribute('cy', (py - 92).toFixed(1));
    c.setAttribute('r', (r / 3).toFixed(1));
    c.setAttribute('fill', '#8ee1f8');
    c.setAttribute('fill-opacity', bright ? 0.88 : 0.7);
    svg.appendChild(c);
}

function inCluster(px, py) {
    return clusters.some(([l, t, w, h]) => px >= l && px < l + w && py >= t && py < t + h);
}

patches.forEach(([left, top, sx, points]) => {
    points.forEach(([x, y, r, bright]) => {
        const px = left + x / sx;
        const py = top + y / 3;
        if (!inCluster(px, py)) addGrain(px, py, r, bright);
    });
});

clusters.forEach(([left, top, w, h, points]) => {
    points.forEach(([x, y, r, bright]) => addGrain(left + x / 3, top + y / 3, r, bright));
});
```
